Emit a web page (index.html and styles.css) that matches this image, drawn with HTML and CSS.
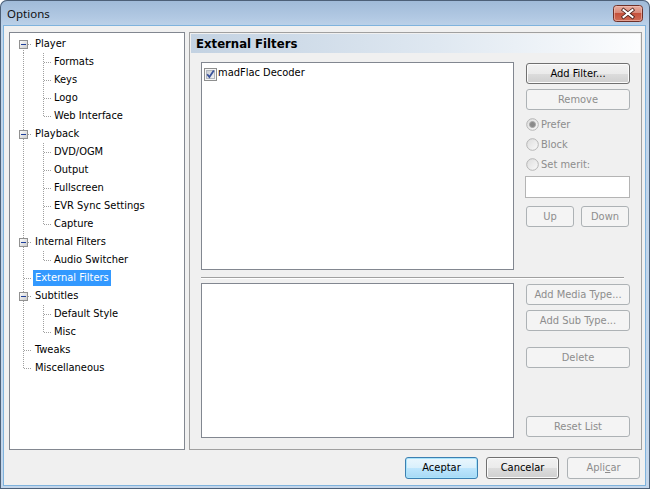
FILE: index.html
```html
<!DOCTYPE html>
<html>
<head>
<meta charset="utf-8">
<title>Options</title>
<link rel="stylesheet" href="styles.css">
</head>
<body>
<div class="window">
  <div class="titlebar">
    <span class="title">Options</span>
    <svg class="close" width="30" height="17" viewBox="0 0 30 17">
      <defs>
        <linearGradient id="cg" x1="0" y1="0" x2="0" y2="1">
          <stop offset="0" stop-color="#eab0a3"/>
          <stop offset="0.45" stop-color="#d88a7a"/>
          <stop offset="0.5" stop-color="#c5503b"/>
          <stop offset="1" stop-color="#d0705a"/>
        </linearGradient>
      </defs>
      <rect x="0.5" y="0.5" width="29" height="16" rx="3" fill="url(#cg)" stroke="#6e3028"/>
      <rect x="1.5" y="1.5" width="27" height="14" rx="2" fill="none" stroke="#f3c4ba" stroke-opacity="0.6"/>
      <path d="M10.5 5 L19.5 12 M19.5 5 L10.5 12" stroke="#4a201a" stroke-width="3.6" stroke-linecap="square"/>
      <path d="M10.5 5 L19.5 12 M19.5 5 L10.5 12" stroke="#ffffff" stroke-width="2" stroke-linecap="square"/>
    </svg>
  </div>
  <div class="client">
    <div class="main">
      <div class="tree">
        <div class="row r first"><span class="exp"><svg width="9" height="9" viewBox="0 0 9 9"><defs><linearGradient id="eg1" x1="0" y1="0" x2="1" y2="1"><stop offset="0" stop-color="#ffffff"/><stop offset="1" stop-color="#c9c9c9"/></linearGradient></defs><rect x="0.5" y="0.5" width="8" height="8" fill="url(#eg1)" stroke="#919191"/><path d="M2 4.5h5" stroke="#1e3f9a"/></svg></span><span class="lbl">Player</span></div>
        <div class="row c"><span class="lbl">Formats</span></div>
        <div class="row c"><span class="lbl">Keys</span></div>
        <div class="row c"><span class="lbl">Logo</span></div>
        <div class="row c last"><span class="lbl">Web Interface</span></div>
        <div class="row r"><span class="exp"><svg width="9" height="9" viewBox="0 0 9 9"><defs><linearGradient id="eg2" x1="0" y1="0" x2="1" y2="1"><stop offset="0" stop-color="#ffffff"/><stop offset="1" stop-color="#c9c9c9"/></linearGradient></defs><rect x="0.5" y="0.5" width="8" height="8" fill="url(#eg2)" stroke="#919191"/><path d="M2 4.5h5" stroke="#1e3f9a"/></svg></span><span class="lbl">Playback</span></div>
        <div class="row c"><span class="lbl">DVD/OGM</span></div>
        <div class="row c"><span class="lbl">Output</span></div>
        <div class="row c"><span class="lbl">Fullscreen</span></div>
        <div class="row c"><span class="lbl">EVR Sync Settings</span></div>
        <div class="row c last"><span class="lbl">Capture</span></div>
        <div class="row r"><span class="exp"><svg width="9" height="9" viewBox="0 0 9 9"><defs><linearGradient id="eg3" x1="0" y1="0" x2="1" y2="1"><stop offset="0" stop-color="#ffffff"/><stop offset="1" stop-color="#c9c9c9"/></linearGradient></defs><rect x="0.5" y="0.5" width="8" height="8" fill="url(#eg3)" stroke="#919191"/><path d="M2 4.5h5" stroke="#1e3f9a"/></svg></span><span class="lbl">Internal Filters</span></div>
        <div class="row c last"><span class="lbl">Audio Switcher</span></div>
        <div class="row r"><span class="noexp"></span><span class="lbl sel">External Filters</span></div>
        <div class="row r"><span class="exp"><svg width="9" height="9" viewBox="0 0 9 9"><defs><linearGradient id="eg4" x1="0" y1="0" x2="1" y2="1"><stop offset="0" stop-color="#ffffff"/><stop offset="1" stop-color="#c9c9c9"/></linearGradient></defs><rect x="0.5" y="0.5" width="8" height="8" fill="url(#eg4)" stroke="#919191"/><path d="M2 4.5h5" stroke="#1e3f9a"/></svg></span><span class="lbl">Subtitles</span></div>
        <div class="row c"><span class="lbl">Default Style</span></div>
        <div class="row c last"><span class="lbl">Misc</span></div>
        <div class="row r"><span class="noexp"></span><span class="lbl">Tweaks</span></div>
        <div class="row r last"><span class="noexp"></span><span class="lbl">Miscellaneous</span></div>
      </div>
      <div class="page">
        <div class="page-head">External Filters</div>
        <div class="page-body">
          <div class="sec">
            <div class="listbox list1">
              <div class="item">
                <svg class="cb" width="13" height="13" viewBox="0 0 13 13">
                  <defs><linearGradient id="cbg" x1="0" y1="0" x2="1" y2="1"><stop offset="0" stop-color="#c9ccd2"/><stop offset="1" stop-color="#f4f4f5"/></linearGradient></defs>
                  <rect x="0.5" y="0.5" width="12" height="12" fill="#f6f6f6" stroke="#8e8f8f"/>
                  <rect x="2.5" y="2.5" width="8" height="8" fill="url(#cbg)" stroke="#b3b7be"/>
                  <path d="M3.2 6.3 L5.4 9 L9.8 2.6" fill="none" stroke="#3a539b" stroke-width="1.8"/>
                </svg>
                <span>madFlac Decoder</span>
              </div>
            </div>
            <div class="side side1">
              <button class="btn">Add Filter...</button>
              <button class="btn dis b-remove">Remove</button>
              <div class="radios">
                <div class="radio"><svg width="13" height="13" viewBox="0 0 13 13"><defs><linearGradient id="rg1" x1="0" y1="0" x2="1" y2="1"><stop offset="0" stop-color="#dcdcdc"/><stop offset="1" stop-color="#fafafa"/></linearGradient></defs><circle cx="6.5" cy="6.5" r="5.8" fill="url(#rg1)" stroke="#b5b5b5"/><circle cx="6.5" cy="6.5" r="3" fill="#8a8a8a" stroke="#a8a8a8"/></svg><span>Prefer</span></div>
                <div class="radio"><svg width="13" height="13" viewBox="0 0 13 13"><defs><linearGradient id="rg2" x1="0" y1="0" x2="1" y2="1"><stop offset="0" stop-color="#dcdcdc"/><stop offset="1" stop-color="#fafafa"/></linearGradient></defs><circle cx="6.5" cy="6.5" r="5.8" fill="url(#rg2)" stroke="#b5b5b5"/></svg><span>Block</span></div>
                <div class="radio"><svg width="13" height="13" viewBox="0 0 13 13"><defs><linearGradient id="rg3" x1="0" y1="0" x2="1" y2="1"><stop offset="0" stop-color="#dcdcdc"/><stop offset="1" stop-color="#fafafa"/></linearGradient></defs><circle cx="6.5" cy="6.5" r="5.8" fill="url(#rg3)" stroke="#b5b5b5"/></svg><span>Set merit:</span></div>
              </div>
              <div class="edit"></div>
              <div class="updown">
                <button class="btn dis small">Up</button>
                <button class="btn dis small">Down</button>
              </div>
            </div>
          </div>
          <div class="sep"></div>
          <div class="sec">
            <div class="listbox list2"></div>
            <div class="side side2">
              <button class="btn dis">Add Media Type...</button>
              <button class="btn dis b-sub">Add Sub Type...</button>
              <button class="btn dis b-del">Delete</button>
              <button class="btn dis b-reset">Reset List</button>
            </div>
          </div>
        </div>
      </div>
    </div>
    <div class="buttons">
      <button class="btn main-btn default">Aceptar</button>
      <button class="btn main-btn">Cancelar</button>
      <button class="btn main-btn dis">Apli<u>c</u>ar</button>
    </div>
  </div>
</div>
</body>
</html>
```

FILE: styles.css
```css
* { box-sizing: border-box; }
html, body { margin: 0; padding: 0; }
body {
  width: 650px;
  height: 489px;
  overflow: hidden;
  background: #ffffff;
  font-family: "DejaVu Sans Condensed", "DejaVu Sans", sans-serif;
  font-stretch: condensed;
  font-size: 11px;
  color: #000;
}

.window {
  width: 650px;
  height: 489px;
  display: flex;
  flex-direction: column;
  padding: 0 5px 4px 4px;
  border-radius: 7px 7px 0 0;
  background: linear-gradient(to bottom, #9fbad8 0px, #b2c9e3 18px, #bfd4ea 28px, #c3d6eb 100%);
  box-shadow: inset 0 0 0 1px #4d6078;
}

.titlebar {
  flex: none;
  height: 26px;
  display: flex;
  justify-content: space-between;
  align-items: flex-start;
}
.title {
  font-family: "Noto Sans", sans-serif;
  font-stretch: normal;
  font-size: 11.5px;
  line-height: 16px;
  margin: 6px 0 0 3px;
  color: #111;
}
.close { display: block; margin: 5px 2px 0 0; }

.client {
  flex: 1;
  background: #f0f0f0;
  box-shadow: 0 0 0 1px #7fb3dd;
  display: flex;
  flex-direction: column;
  padding: 6px 3px 6px 5px;
}

.main { display: flex; gap: 4px; height: 418px; flex: none; }

/* tree */
.tree {
  width: 176px;
  flex: none;
  border: 1px solid #828790;
  background: #fff;
  padding-top: 2px;
}
.row {
  --d: #a0a0a0;
  --v: repeating-linear-gradient(to bottom, var(--d) 0 1px, transparent 1px 2px);
  --h: repeating-linear-gradient(to right, var(--d) 0 1px, transparent 1px 2px);
  height: 18px;
  display: flex;
  align-items: center;
  background-repeat: no-repeat;
  white-space: nowrap;
}
.row.r {
  background-image: var(--v), var(--h);
  background-size: 1px 18px, 8px 1px;
  background-position: 13px 0, 14px 9px;
}
.row.r.first {
  background-size: 1px 9px, 8px 1px;
  background-position: 13px 9px, 14px 9px;
}
.row.r.last {
  background-size: 1px 10px, 8px 1px;
}
.row.c {
  padding-left: 42px;
  background-image: var(--v), var(--v), var(--h);
  background-size: 1px 18px, 1px 18px, 8px 1px;
  background-position: 13px 0, 33px 0, 34px 9px;
}
.row.c.last {
  background-size: 1px 18px, 1px 10px, 8px 1px;
}
.exp, .noexp {
  flex: none;
  width: 9px;
  height: 9px;
  margin: 5px 5px 0 9px;
  align-self: flex-start;
}
.exp svg { display: block; }
.lbl {
  padding: 0 2px;
  height: 16px;
  line-height: 15px;
}
.lbl.sel { background: #3399ff; color: #fff; }

/* page */
.page {
  flex: 1;
  border: 1px solid #a0a0a0;
  display: flex;
  flex-direction: column;
}
.page-head {
  margin: 1px 1px 0 1px;
  height: 19px;
  line-height: 19px;
  padding-left: 5px;
  font-weight: bold;
  font-size: 13px;
  background: linear-gradient(to right, #c3d2e2 0%, #dfe8f1 55%, #fcfdfe 100%);
}
.page-body { padding: 9px 0 0 11px; }
.sec { display: flex; }
.listbox { border: 1px solid #828790; background: #fff; flex: none; }
.list1 { width: 313px; height: 208px; }
.list2 { width: 313px; height: 155px; }
.item {
  display: flex;
  align-items: center;
  gap: 1px;
  padding: 3px 0 0 2px;
  height: 16px;
  line-height: 13px;
}
.cb { display: block; flex: none; margin-top: 3px; }

.side {
  margin-left: 12px;
  width: 104px;
  display: flex;
  flex-direction: column;
  align-items: flex-start;
  padding-top: 1px;
}

.btn {
  font: inherit;
  font-stretch: condensed;
  color: #000;
  width: 104px;
  height: 21px;
  padding: 0;
  border: 1px solid #707070;
  border-radius: 3px;
  background: linear-gradient(to bottom, #f2f2f2 0%, #ebebeb 50%, #dddddd 51%, #cfcfcf 100%);
  box-shadow: inset 0 0 0 1px #fbfbfb;
  line-height: 17px;
  text-align: center;
}
.btn.dis {
  color: #8d8d8d;
  border-color: #adb2b5;
  background: #f4f4f4;
  box-shadow: none;
}
.b-remove { margin-top: 5px; }
.radios { margin-top: 4px; }
.radio {
  height: 20px;
  display: flex;
  align-items: center;
  gap: 2px;
  color: #8d8d8d;
}
.radio svg { display: block; flex: none; }
.edit {
  margin: 2px 0 0 -1px;
  width: 105px;
  height: 22px;
  border: 1px solid #b4b4b4;
  background: #fff;
}
.updown {
  margin-top: 8px;
  display: flex;
  gap: 7px;
}
.btn.small { width: 48px; }

.sep {
  width: 423px;
  height: 2px;
  margin: 7px 0 4px 0;
  border-top: 1px solid #a0a0a0;
  border-bottom: 1px solid #ffffff;
}
.b-sub { margin-top: 5px; }
.b-del { margin-top: 16px; }
.b-reset { margin-top: 48px; }

.buttons {
  flex: none;
  display: flex;
  justify-content: flex-end;
  gap: 8px;
  margin-top: 7px;
  padding-right: 2px;
  height: 22px;
}
.main-btn { width: 73px; height: 22px; line-height: 18px; }
.main-btn.default {
  border-color: #3c7fb1;
  box-shadow: inset 0 0 0 1px #a9e4fb;
  background: linear-gradient(to bottom, #eaf6fd 0%, #d9f0fc 50%, #bee6fd 51%, #a7d9f5 100%);
}
.main-btn u { text-decoration: underline; }
```
